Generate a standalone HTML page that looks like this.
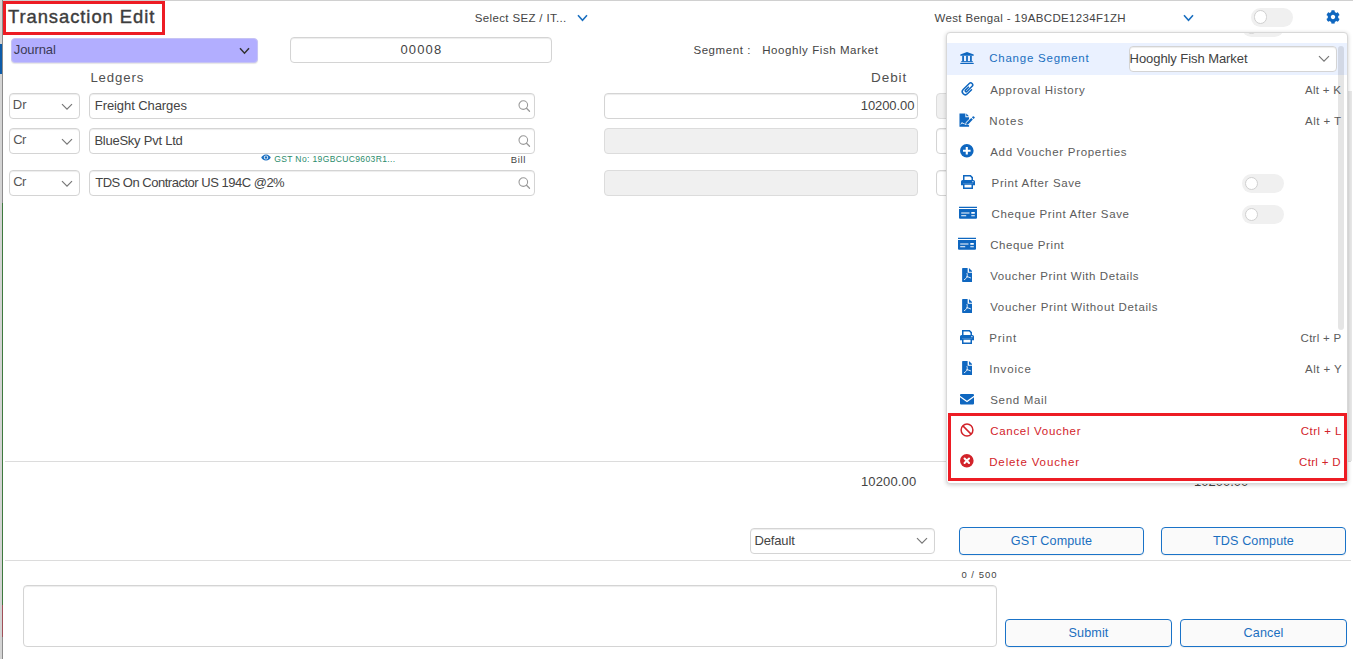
<!DOCTYPE html>
<html>
<head>
<meta charset="utf-8">
<title>Transaction Edit</title>
<style>
*{box-sizing:border-box;margin:0;padding:0}
html,body{width:1353px;height:659px;overflow:hidden;background:#fff}
body{position:relative;font-family:"Liberation Sans",sans-serif;color:#444;font-size:13px}
.abs{position:absolute}
.t{position:absolute;white-space:nowrap;line-height:normal}
.box{position:absolute;border:1px solid #d4d4d4;border-radius:4px;background:#fff;box-shadow:inset 0 1px 1px rgba(0,0,0,.075)}
.box.dis{background:#f0f0f0;border-color:#dcdcdc;box-shadow:none}
.btn{position:absolute;border:1px solid #1a73c8;border-radius:4px;background:#fafafa;box-shadow:0 1px 1px rgba(0,0,0,.06)}
.hr{position:absolute;height:1px;background:#dcdcdc}
.chev{position:absolute}
#dd svg{position:absolute}
.tog{position:absolute;width:42px;height:19px;border-radius:9.5px;background:#f0f0f0}
.tog:after{content:"";position:absolute;left:2.5px;top:2.75px;width:11.5px;height:11.5px;border-radius:50%;background:#fff;border:1px solid #d0d0d0}
</style>
</head>
<body>
<div class="abs" style="left:0;top:0;width:2px;height:659px;background:#d4d4d4"></div>
<div class="abs" style="left:0;top:44px;width:2px;height:30px;background:#0d5ba8"></div>
<div class="abs" style="left:2px;top:0;width:1px;height:659px;background:#8c8c8c"></div>
<div class="abs" style="left:2px;top:203px;width:1px;height:402px;background:#3f7a3f"></div>
<div class="abs" style="left:2px;top:605px;width:1px;height:32px;background:#a05058"></div>
<div class="abs" style="left:3px;top:0;width:1350px;height:1px;background:#d0d0d0"></div>
<div class="abs" style="left:1348px;top:91px;width:3.500px;height:370px;background:#e8e8e8"></div>
<div class="t" id="title" style="left:7.90px;top:6.35px;font-size:18.4px;letter-spacing:0.950px;color:#3d3d3d;-webkit-text-stroke:.4px #3d3d3d;">Transaction Edit</div>
<div class="abs" style="left:3px;top:1px;width:162px;height:34px;border:3px solid #ed1c24"></div>
<div class="t" id="sez" style="left:474.80px;top:11.90px;font-size:11.5px;letter-spacing:0.346px;color:#444;">Select SEZ / IT...</div>
<svg class="chev" style="left:576.9px;top:13.7px" width="11" height="8" viewBox="0 0 11 8"><path d="M1 1.2 L5.5 6.2 L10 1.2" fill="none" stroke="#1a6fc0" stroke-width="1.6"/></svg>
<div class="t" id="wb" style="left:934.60px;top:11.90px;font-size:11.5px;letter-spacing:0.324px;color:#444;">West Bengal - 19ABCDE1234F1ZH</div>
<svg class="chev" style="left:1182.6px;top:13.7px" width="11" height="8" viewBox="0 0 11 8"><path d="M1 1.2 L5.5 6.2 L10 1.2" fill="none" stroke="#1a6fc0" stroke-width="1.6"/></svg>
<div class="tog" style="left:1251px;top:7.600px"></div>
<svg class="abs" style="left:1325.7px;top:10px" width="14" height="14" viewBox="0 0 512 512"><path fill="#0f67c0" d="M487.400 315.700l-42.600-24.600c4.300-23.200 4.300-47 0-70.200l42.600-24.600c4.900-2.800 7.100-8.600 5.500-14-11.100-35.600-30-67.800-54.700-94.600-3.800-4.100-10-5.100-14.800-2.300L380.800 110c-17.900-15.400-38.500-27.300-60.800-35.100V25.800c0-5.600-3.900-10.500-9.400-11.700-36.700-8.200-74.300-7.800-109.200 0-5.500 1.200-9.400 6.100-9.400 11.700V75c-22.200 7.900-42.800 19.800-60.800 35.100L88.700 85.500c-4.900-2.800-11-1.900-14.800 2.300-24.700 26.700-43.600 58.900-54.700 94.600-1.700 5.400.6 11.200 5.500 14L67.300 221c-4.300 23.200-4.300 47 0 70.200l-42.600 24.600c-4.900 2.800-7.100 8.600-5.500 14 11.100 35.600 30 67.800 54.700 94.600 3.800 4.100 10 5.100 14.800 2.300l42.600-24.600c17.900 15.400 38.500 27.300 60.800 35.100v49.200c0 5.600 3.900 10.500 9.400 11.700 36.700 8.200 74.300 7.800 109.200 0 5.500-1.200 9.400-6.100 9.400-11.700v-49.200c22.200-7.900 42.800-19.800 60.800-35.100l42.600 24.600c4.900 2.800 11 1.900 14.800-2.300 24.700-26.700 43.600-58.900 54.700-94.600 1.500-5.500-.7-11.300-5.600-14.100zM256 336c-44.100 0-80-35.900-80-80s35.900-80 80-80 80 35.900 80 80-35.900 80-80 80z"/></svg>
<div class="abs" id="journal" style="left:10.500px;top:37.500px;width:247px;height:25px;border-radius:4px;background:#b2aeff;border:1px solid #c6c3f5;box-shadow:0 1px 1px rgba(0,0,0,.1)"></div>
<div class="t" id="jr" style="left:13.80px;top:42.03px;font-size:13px;letter-spacing:-0.100px;color:#3a3a55;">Journal</div>
<svg class="chev" style="left:239px;top:46.5px" width="11" height="8" viewBox="0 0 11 8"><path d="M1 1.2 L5.5 6.2 L10 1.2" fill="none" stroke="#333" stroke-width="1.5"/></svg>
<div class="box" style="left:290px;top:37px;width:262px;height:26px"></div>
<div class="t" id="num" style="left:400.40px;top:42.23px;font-size:13px;letter-spacing:1.175px;color:#444;">00008</div>
<div class="t" id="seg" style="left:693.40px;top:43.59px;font-size:11.5px;letter-spacing:0.570px;color:#444;">Segment :&nbsp;&nbsp; Hooghly Fish Market</div>
<div class="t" id="ledgers" style="left:90.40px;top:70.23px;font-size:13.2px;letter-spacing:0.900px;color:#505050;">Ledgers</div>
<div class="t" id="debit" style="left:871.00px;top:70.40px;font-size:13.5px;letter-spacing:0.950px;color:#505050;">Debit</div>
<div class="box" style="left:9px;top:93px;width:71px;height:26px"></div>
<div class="t" id="dc0" style="left:12.80px;top:97.16px;font-size:13px;letter-spacing:0.000px;color:#555;">Dr</div>
<svg class="chev" style="left:61px;top:103px" width="12" height="8" viewBox="0 0 12 8"><path d="M1 1.2 L6.0 6.2 L11 1.2" fill="none" stroke="#777" stroke-width="1.2"/></svg>
<div class="box" style="left:89px;top:93px;width:446px;height:26px"></div>
<div class="t" id="led0" style="left:94.80px;top:98.16px;font-size:13px;letter-spacing:-0.079px;color:#444;">Freight Charges</div>
<svg class="abs" style="left:518px;top:100px" width="13" height="13" viewBox="0 0 13 13"><circle cx="5.300" cy="5.100" r="4.300" fill="none" stroke="#999" stroke-width="1.100"/><path d="M8.500 8.300 L11.500 11.300" stroke="#999" stroke-width="1.300" stroke-linecap="round"/></svg>
<div class="box" style="left:604px;top:93px;width:314px;height:26px"></div>
<div class="t" id="amt" style="left:860.80px;top:98.23px;font-size:13px;letter-spacing:-0.087px;color:#444;">10200.00</div>
<div class="box dis" style="left:936px;top:93px;width:314px;height:26px"></div>
<div class="box" style="left:9px;top:128px;width:71px;height:26px"></div>
<div class="t" id="dc1" style="left:13.30px;top:132.16px;font-size:13px;letter-spacing:-0.600px;color:#555;">Cr</div>
<svg class="chev" style="left:61px;top:138px" width="12" height="8" viewBox="0 0 12 8"><path d="M1 1.2 L6.0 6.2 L11 1.2" fill="none" stroke="#777" stroke-width="1.2"/></svg>
<div class="box" style="left:89px;top:128px;width:446px;height:26px"></div>
<div class="t" id="led1" style="left:94.40px;top:133.16px;font-size:13px;letter-spacing:-0.243px;color:#444;">BlueSky Pvt Ltd</div>
<svg class="abs" style="left:518px;top:135px" width="13" height="13" viewBox="0 0 13 13"><circle cx="5.300" cy="5.100" r="4.300" fill="none" stroke="#999" stroke-width="1.100"/><path d="M8.500 8.300 L11.500 11.300" stroke="#999" stroke-width="1.300" stroke-linecap="round"/></svg>
<div class="box dis" style="left:604px;top:128px;width:314px;height:26px"></div>
<div class="box" style="left:936px;top:128px;width:314px;height:26px"></div>
<div class="box" style="left:9px;top:170px;width:71px;height:26px"></div>
<div class="t" id="dc2" style="left:13.30px;top:174.16px;font-size:13px;letter-spacing:-0.600px;color:#555;">Cr</div>
<svg class="chev" style="left:61px;top:180px" width="12" height="8" viewBox="0 0 12 8"><path d="M1 1.2 L6.0 6.2 L11 1.2" fill="none" stroke="#777" stroke-width="1.2"/></svg>
<div class="box" style="left:89px;top:170px;width:446px;height:26px"></div>
<div class="t" id="led2" style="left:95.20px;top:175.16px;font-size:13px;letter-spacing:-0.490px;color:#444;">TDS On Contractor US 194C @2%</div>
<svg class="abs" style="left:518px;top:177px" width="13" height="13" viewBox="0 0 13 13"><circle cx="5.300" cy="5.100" r="4.300" fill="none" stroke="#999" stroke-width="1.100"/><path d="M8.500 8.300 L11.500 11.300" stroke="#999" stroke-width="1.300" stroke-linecap="round"/></svg>
<div class="box dis" style="left:604px;top:170px;width:314px;height:26px"></div>
<div class="box" style="left:936px;top:170px;width:314px;height:26px"></div>
<svg class="abs" style="left:260.8px;top:153.8px" width="10" height="7" viewBox="0 0 20 14"><path d="M10 1 C5 1 1.500 5 0.500 7 C1.500 9 5 13 10 13 C15 13 18.500 9 19.500 7 C18.500 5 15 1 10 1 Z" fill="#1a6fc0"/><circle cx="10" cy="7" r="4.200" fill="#fff"/><circle cx="10" cy="7" r="2.600" fill="#1a6fc0"/></svg>
<div class="t" id="gst" style="left:274.20px;top:153.92px;font-size:8.5px;letter-spacing:0.375px;color:#2a8b6b;">GST No: 19GBCUC9603R1...</div>
<div class="t" id="bill" style="left:510.80px;top:154.40px;font-size:9.5px;letter-spacing:0.600px;color:#444;">Bill</div>
<div class="hr" style="left:5px;top:461px;width:1346px"></div>
<div class="t" id="tot1" style="left:861.00px;top:474.07px;font-size:13px;letter-spacing:0.143px;color:#444;">10200.00</div>
<div class="t" id="tot2" style="left:1194.00px;top:474.07px;font-size:13px;letter-spacing:0.000px;color:#444;">10200.00</div>
<div class="box" style="left:750px;top:528px;width:185px;height:26px"></div>
<div class="t" id="def" style="left:754.40px;top:532.62px;font-size:13px;letter-spacing:-0.133px;color:#444;">Default</div>
<svg class="chev" style="left:916px;top:537px" width="12" height="8" viewBox="0 0 12 8"><path d="M1 1.2 L6.0 6.2 L11 1.2" fill="none" stroke="#777" stroke-width="1.2"/></svg>
<div class="btn" style="left:959px;top:527px;width:185px;height:28px"></div><div class="t" id="gstc" style="left:959px;width:185px;text-align:center;top:534.2px;font-size:12.6px;letter-spacing:0.1px;color:#1a6fc0">GST Compute</div>
<div class="btn" style="left:1161px;top:527px;width:185px;height:28px"></div><div class="t" id="tdsc" style="left:1161px;width:185px;text-align:center;top:534.2px;font-size:12.6px;letter-spacing:0.1px;color:#1a6fc0">TDS Compute</div>
<div class="hr" style="left:5px;top:560px;width:1346px"></div>
<div class="t" id="cnt" style="left:961.40px;top:568.86px;font-size:9.5px;letter-spacing:1.017px;color:#444;">0 / 500</div>
<div class="box" style="left:23px;top:585px;width:974px;height:62px"></div>
<div class="btn" style="left:1005px;top:619px;width:167px;height:28px"></div><div class="t" id="sub" style="left:1005px;width:167px;text-align:center;top:626.2px;font-size:12.6px;letter-spacing:0.1px;color:#1a6fc0">Submit</div>
<div class="btn" style="left:1180px;top:619px;width:167px;height:28px"></div><div class="t" id="can" style="left:1180px;width:167px;text-align:center;top:626.2px;font-size:12.6px;letter-spacing:0.1px;color:#1a6fc0">Cancel</div>
<div id="ddbg" class="abs" style="left:946px;top:32px;width:402px;height:452px;background:#fff;border:1px solid #d8d8d8;border-radius:4px;box-shadow:0 1px 4px rgba(0,0,0,.2)"></div>
<div class="abs" id="ddc" style="left:947px;top:33px;width:400px;height:450px;overflow:hidden;border-radius:3px"><div id="dd" class="abs" style="left:-947px;top:-33px;width:1353px;height:659px">
<div class="tog" style="left:1242px;top:17.500px"></div>
<div class="abs" style="left:947px;top:43.200px;width:401px;height:31.500px;background:#eaf1ff"></div>
<svg style="left:960.0px;top:52.2px" width="14" height="12.2" viewBox="0 0 16 14"><path fill="#0f67c0" d="M8 0 L15.700 3 V4.400 H0.300 V3 Z"/><rect fill="#0f67c0" x="2.500" y="4.400" width="2" height="6.200"/><rect fill="#0f67c0" x="7" y="4.400" width="2" height="6.200"/><rect fill="#0f67c0" x="11.500" y="4.400" width="2" height="6.200"/><rect fill="#0f67c0" x="1.400" y="10.500" width="13.200" height="1.200"/><rect fill="#0f67c0" x="0.300" y="12.500" width="15.400" height="1.500"/></svg>
<div class="t" id="m0" style="left:989.20px;top:51.59px;font-size:11.5px;letter-spacing:0.768px;color:#1a6fc0;">Change Segment</div>
<div class="box" style="left:1129px;top:46px;width:208px;height:26px"></div>
<div class="t" id="hfm" style="left:1129.60px;top:50.53px;font-size:13px;letter-spacing:-0.070px;color:#424242;">Hooghly Fish Market</div>
<svg class="chev" style="left:1318px;top:55px" width="12" height="8" viewBox="0 0 12 8"><path d="M1 1.2 L6.0 6.2 L11 1.2" fill="none" stroke="#777" stroke-width="1.2"/></svg>
<svg style="left:959.8px;top:80.9px" width="16" height="16" viewBox="-8 -8 16 16"><g transform="rotate(45) translate(-3.0 -6.8)"><path fill="none" stroke="#0f67c0" stroke-width="1.500" stroke-linecap="round" stroke-linejoin="round" d="M 6.0 4.800 L 6.0 10.6 A 3.0 3.0 0 0 1 0 10.6 L 0 2.0 A 2.0 2.0 0 0 1 4.0 2.0 L 4.0 9.399999999999999 A 1.0 1.0 0 0 1 2.0 9.399999999999999 L 2.0 5.200"/></g></svg>
<div class="t" id="m1" style="left:990.20px;top:83.59px;font-size:11.5px;letter-spacing:0.674px;color:#5c5c5c;">Approval History</div>
<div class="t" id="k1" style="left:1305.00px;top:83.59px;font-size:11.5px;letter-spacing:0.300px;color:#5c5c5c;">Alt + K</div>
<svg style="left:959.0px;top:112.9px" width="16" height="14.2" viewBox="0 0 17 14"><path fill="#0f67c0" d="M0.500 0 H6.800 V3.900 H10.700 V14 H0.500 Z"/><path fill="#0f67c0" d="M7.700 0.100 L10.600 3 H7.700 Z"/><path fill="none" stroke="#fff" stroke-width="0.900" stroke-linejoin="round" d="M1.900 11.600 L3.300 9.500 L4.300 11.100 L5.100 10.400 L6 11.300 H7.600"/><path d="M8.600 11 L15.700 3.900" stroke="#fff" stroke-width="4.300" stroke-linecap="butt"/><path fill="#fff" d="M6.900 12.200 L7.300 9.200 L10 11.900 Z"/><path fill="#0f67c0" d="M7.500 11.900 L7.900 9.900 L13 4.800 L14.700 6.500 L9.600 11.600 Z"/><path fill="#0f67c0" d="M13.700 4.100 L14.700 3.100 A0.800 0.800 0 0 1 15.800 3.100 L16.500 3.800 A0.800 0.800 0 0 1 16.500 4.900 L15.500 5.900 Z"/></svg>
<div class="t" id="m2" style="left:989.20px;top:114.59px;font-size:11.5px;letter-spacing:0.975px;color:#5c5c5c;">Notes</div>
<div class="t" id="k2" style="left:1305.00px;top:114.59px;font-size:11.5px;letter-spacing:0.466px;color:#5c5c5c;">Alt + T</div>
<svg style="left:960.4px;top:144.2px" width="13.6" height="13.6" viewBox="0 0 14 14"><circle cx="7" cy="7" r="7" fill="#0f67c0"/><path d="M7 3.100 V10.900 M3.100 7 H10.900" stroke="#fff" stroke-width="2.200"/></svg>
<div class="t" id="m3" style="left:990.20px;top:145.59px;font-size:11.5px;letter-spacing:0.709px;color:#5c5c5c;">Add Voucher Properties</div>
<svg style="left:961.1px;top:174.9px" width="14" height="14.2" viewBox="0 0 14 14"><path fill="#0f67c0" d="M2 0 H9.800 L12 2.200 V5.200 H10.500 V2.900 L9.100 1.500 H3.500 V5.200 H2 Z"/><path fill="#0f67c0" d="M1.700 4.800 H12.300 A1.700 1.700 0 0 1 14 6.500 V10.200 H12 V8.200 H2 V10.200 H0 V6.500 A1.700 1.700 0 0 1 1.700 4.800 Z"/><circle cx="11.900" cy="6.600" r="0.650" fill="#fff"/><path fill="#0f67c0" fill-rule="evenodd" d="M2 8.200 H12 V14 H2 Z M3.500 9.700 V12.500 H10.500 V9.700 Z"/></svg>
<div class="t" id="m4" style="left:991.60px;top:176.59px;font-size:11.5px;letter-spacing:0.633px;color:#5c5c5c;">Print After Save</div>
<div class="tog" style="left:1242px;top:174.0px"></div>
<svg style="left:959.0px;top:207.0px" width="18" height="12" viewBox="0 0 18 12" overflow="visible"><path fill="#0f67c0" d="M0 -0.300 H18 V1.050 H0 Z"/><path fill="#0f67c0" fill-rule="evenodd" d="M0 2 H18 V10.700 A1 1 0 0 1 17 11.700 H1 A1 1 0 0 1 0 10.700 Z M2.200 5.600 V6.600 H10.500 V5.600 Z M2.200 8.200 V9.200 H7.200 V8.200 Z M12.300 5.100 V6.800 H15.800 V5.100 Z M12.300 8.200 V9.200 H15.800 V8.200 Z"/></svg>
<div class="t" id="m5" style="left:991.60px;top:207.59px;font-size:11.5px;letter-spacing:0.637px;color:#5c5c5c;">Cheque Print After Save</div>
<div class="tog" style="left:1242px;top:205.0px"></div>
<svg style="left:958.0px;top:238.0px" width="18" height="12" viewBox="0 0 18 12" overflow="visible"><path fill="#0f67c0" d="M0 -0.300 H18 V1.050 H0 Z"/><path fill="#0f67c0" fill-rule="evenodd" d="M0 2 H18 V10.700 A1 1 0 0 1 17 11.700 H1 A1 1 0 0 1 0 10.700 Z M2.200 5.600 V6.600 H10.500 V5.600 Z M2.200 8.200 V9.200 H7.200 V8.200 Z M12.300 5.100 V6.800 H15.800 V5.100 Z M12.300 8.200 V9.200 H15.800 V8.200 Z"/></svg>
<div class="t" id="m6" style="left:990.20px;top:238.59px;font-size:11.5px;letter-spacing:0.591px;color:#5c5c5c;">Cheque Print</div>
<svg style="left:961.75px;top:268.0px" width="10.5" height="14" viewBox="0 0 11 15"><path fill="#0f67c0" d="M0.700 0 H5.900 V4.500 A0.700 0.700 0 0 0 6.600 5.200 H11 V14.300 A0.700 0.700 0 0 1 10.300 15 H0.700 A0.700 0.700 0 0 1 0 14.300 V0.700 A0.700 0.700 0 0 1 0.700 0 Z"/><path fill="#0f67c0" d="M7.300 0 L11 3.700 V3.900 H7.300 Z"/><path fill="none" stroke="#fff" stroke-width="0.950" stroke-linecap="round" d="M5.300 5.900 C5.900 7.400 5.300 8.500 5.300 9.400 M5.300 9.400 C4.400 10.900 3.500 12 2.400 12.500 M5.300 9.400 C6.600 9.600 7.800 9.900 9 10.500"/></svg>
<div class="t" id="m7" style="left:990.20px;top:269.59px;font-size:11.5px;letter-spacing:0.592px;color:#5c5c5c;">Voucher Print With Details</div>
<svg style="left:961.75px;top:299.0px" width="10.5" height="14" viewBox="0 0 11 15"><path fill="#0f67c0" d="M0.700 0 H5.900 V4.500 A0.700 0.700 0 0 0 6.600 5.200 H11 V14.300 A0.700 0.700 0 0 1 10.300 15 H0.700 A0.700 0.700 0 0 1 0 14.300 V0.700 A0.700 0.700 0 0 1 0.700 0 Z"/><path fill="#0f67c0" d="M7.300 0 L11 3.700 V3.900 H7.300 Z"/><path fill="none" stroke="#fff" stroke-width="0.950" stroke-linecap="round" d="M5.300 5.900 C5.900 7.400 5.300 8.500 5.300 9.400 M5.300 9.400 C4.400 10.900 3.500 12 2.400 12.500 M5.300 9.400 C6.600 9.600 7.800 9.900 9 10.500"/></svg>
<div class="t" id="m8" style="left:990.20px;top:300.59px;font-size:11.5px;letter-spacing:0.636px;color:#5c5c5c;">Voucher Print Without Details</div>
<svg style="left:960.0px;top:329.9px" width="14" height="14.2" viewBox="0 0 14 14"><path fill="#0f67c0" d="M2 0 H9.800 L12 2.200 V5.200 H10.500 V2.900 L9.100 1.500 H3.500 V5.200 H2 Z"/><path fill="#0f67c0" d="M1.700 4.800 H12.300 A1.700 1.700 0 0 1 14 6.500 V10.200 H12 V8.200 H2 V10.200 H0 V6.500 A1.700 1.700 0 0 1 1.700 4.800 Z"/><circle cx="11.900" cy="6.600" r="0.650" fill="#fff"/><path fill="#0f67c0" fill-rule="evenodd" d="M2 8.200 H12 V14 H2 Z M3.500 9.700 V12.500 H10.500 V9.700 Z"/></svg>
<div class="t" id="m9" style="left:989.20px;top:331.59px;font-size:11.5px;letter-spacing:0.825px;color:#5c5c5c;">Print</div>
<div class="t" id="k9" style="left:1300.60px;top:331.59px;font-size:11.5px;letter-spacing:0.257px;color:#5c5c5c;">Ctrl + P</div>
<svg style="left:961.75px;top:361.0px" width="10.5" height="14" viewBox="0 0 11 15"><path fill="#0f67c0" d="M0.700 0 H5.900 V4.500 A0.700 0.700 0 0 0 6.600 5.200 H11 V14.300 A0.700 0.700 0 0 1 10.300 15 H0.700 A0.700 0.700 0 0 1 0 14.300 V0.700 A0.700 0.700 0 0 1 0.700 0 Z"/><path fill="#0f67c0" d="M7.300 0 L11 3.700 V3.900 H7.300 Z"/><path fill="none" stroke="#fff" stroke-width="0.950" stroke-linecap="round" d="M5.300 5.900 C5.900 7.400 5.300 8.500 5.300 9.400 M5.300 9.400 C4.400 10.900 3.500 12 2.400 12.500 M5.300 9.400 C6.600 9.600 7.800 9.900 9 10.500"/></svg>
<div class="t" id="m10" style="left:989.20px;top:362.59px;font-size:11.5px;letter-spacing:0.867px;color:#5c5c5c;">Invoice</div>
<div class="t" id="k10" style="left:1305.00px;top:362.59px;font-size:11.5px;letter-spacing:0.466px;color:#5c5c5c;">Alt + Y</div>
<svg style="left:960.0px;top:394.15px" width="14" height="10.5" viewBox="0 0 16 12"><path fill="#0f67c0" d="M1.200 0 H14.800 A1.200 1.200 0 0 1 16 1.200 V1.900 L8 7.700 L0 1.900 V1.200 A1.200 1.200 0 0 1 1.200 0 Z"/><path fill="#0f67c0" d="M0 3.700 L8 9.500 L16 3.700 V10.800 A1.200 1.200 0 0 1 14.800 12 H1.200 A1.200 1.200 0 0 1 0 10.800 Z"/></svg>
<div class="t" id="m11" style="left:990.20px;top:393.59px;font-size:11.5px;letter-spacing:0.689px;color:#5c5c5c;">Send Mail</div>
<svg style="left:960.0px;top:422.7px" width="14" height="14" viewBox="0 0 14 14"><circle cx="7" cy="7" r="5.900" fill="none" stroke="#d2232a" stroke-width="1.500"/><path d="M2.900 2.900 L11.100 11.100" stroke="#d2232a" stroke-width="1.500"/></svg>
<div class="t" id="m12" style="left:990.20px;top:424.59px;font-size:11.5px;letter-spacing:0.699px;color:#d2232a;">Cancel Voucher</div>
<div class="t" id="k12" style="left:1300.80px;top:424.59px;font-size:11.5px;letter-spacing:0.450px;color:#d2232a;">Ctrl + L</div>
<svg style="left:960.2px;top:454.2px" width="13.6" height="13.6" viewBox="0 0 14 14"><circle cx="7" cy="7" r="7" fill="#d2232a"/><path d="M4.700 4.700 L9.300 9.300 M9.300 4.700 L4.700 9.300" stroke="#fff" stroke-width="2.100" stroke-linecap="round"/></svg>
<div class="t" id="m13" style="left:989.20px;top:455.59px;font-size:11.5px;letter-spacing:0.869px;color:#d2232a;">Delete Voucher</div>
<div class="t" id="k13" style="left:1299.10px;top:455.59px;font-size:11.5px;letter-spacing:0.300px;color:#d2232a;">Ctrl + D</div>
<div class="abs" style="left:1338px;top:46px;width:6px;height:284px;border-radius:3px;background:rgba(0,0,0,.1)"></div>
<div class="abs" style="left:948px;top:413px;width:399px;height:68px;border:3px solid #ed1c24"></div>
</div></div>
</body>
</html>
